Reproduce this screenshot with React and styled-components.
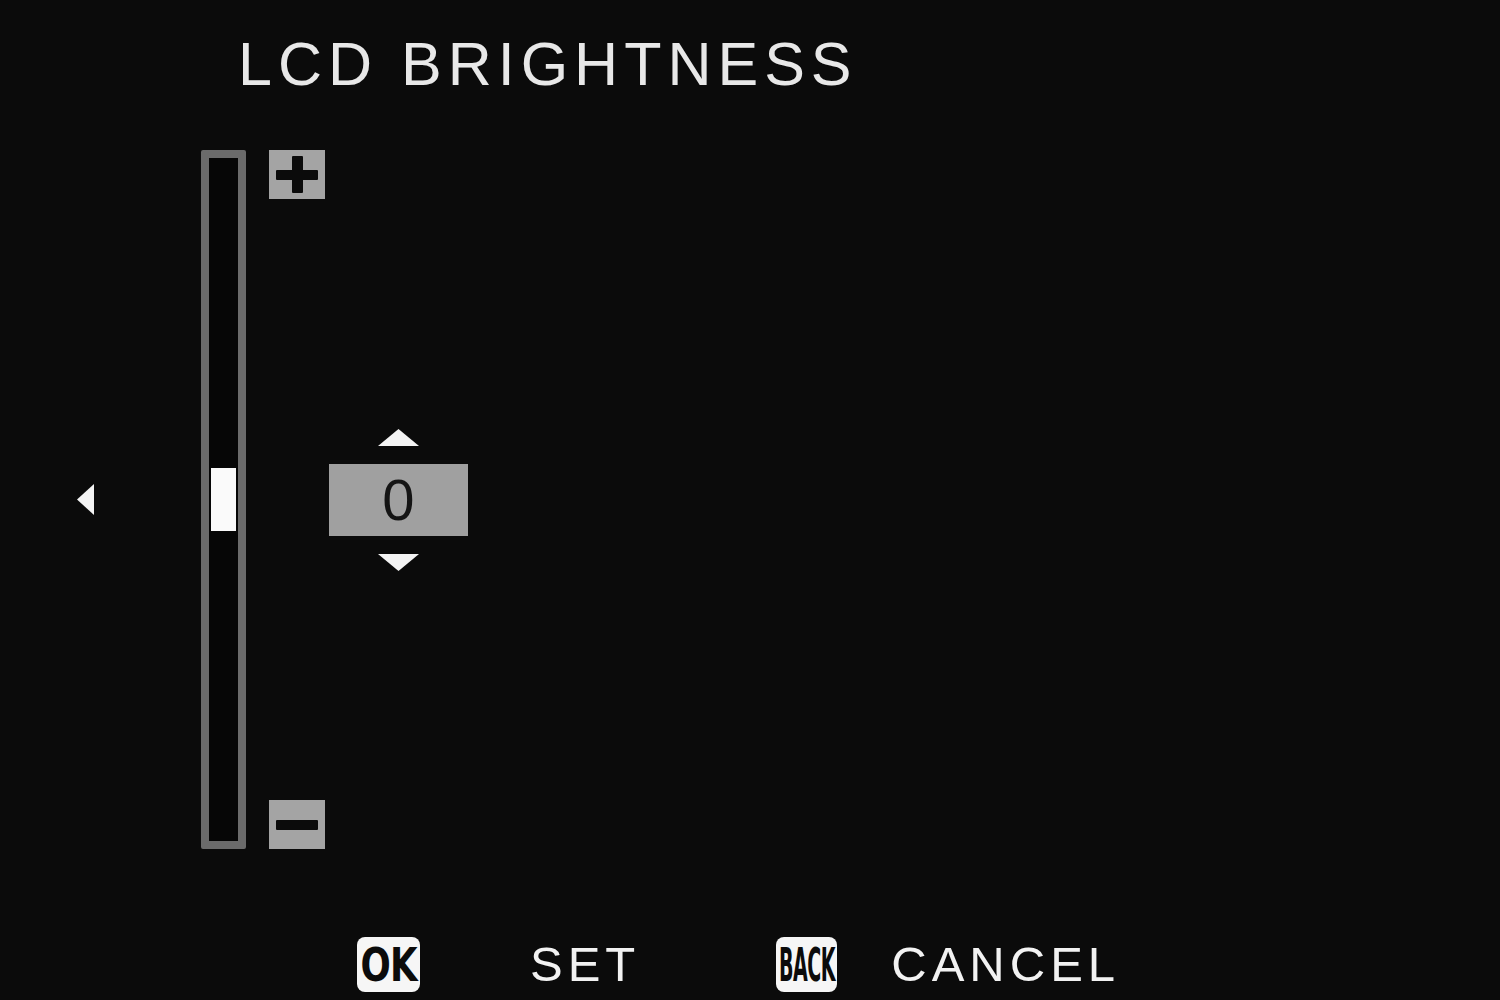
import React from 'react'
import styled, { createGlobalStyle } from 'styled-components'

const GlobalStyle = createGlobalStyle`
    html, body {
        margin: 0;
        padding: 0;
        background: #0b0b0b;
    }
`;

const Triangle = ({ dir, w, h }) => {
    const points = {
        up: `0,${h} ${w / 2},0 ${w},${h}`,
        down: `0,0 ${w},0 ${w / 2},${h}`,
        left: `${w},0 0,${h / 2} ${w},${h}`,
    }[dir]
    return (
        <svg width={w} height={h} viewBox={`0 0 ${w} ${h}`} style={{ display: 'block' }}>
            <polygon points={points} fill="#f4f4f4" />
        </svg>
    )
}

const Key = ({ label, scale, left, width }) => (
    <KeyBadge $left={left} $width={width}>
        <KeyLabel $scale={scale}>{label}</KeyLabel>
    </KeyBadge>
)

export default function App() {
    const level = 0
    return (
        <>
            <GlobalStyle />
            <Screen>
                <Title>LCD BRIGHTNESS</Title>
                <Main>
                    <Pointer>
                        <Triangle dir="left" w={17} h={31} />
                    </Pointer>
                    <Track>
                        <Thumb />
                    </Track>
                    <ButtonColumn>
                        <StepButton>
                            <PlusBar />
                            <PlusStem />
                        </StepButton>
                        <StepButton>
                            <PlusBar />
                        </StepButton>
                    </ButtonColumn>
                    <Stepper>
                        <Triangle dir="up" w={41} h={17} />
                        <ValueBox>{level}</ValueBox>
                        <Triangle dir="down" w={41} h={17} />
                    </Stepper>
                </Main>
                <Footer>
                    <Key label="OK" scale={0.86} left={357} width={63} />
                    <Hint $left={110}>SET</Hint>
                    <Key label="BACK" scale={0.46} left={136} width={61} />
                    <Hint $left={54}>CANCEL</Hint>
                </Footer>
            </Screen>
        </>
    )
}

const Screen = styled.div`
    width: 1500px;
    height: 1000px;
    background: #0b0b0b;
    display: flex;
    flex-direction: column;
    font-family: "Liberation Sans", Arial, sans-serif;
    color: #f2f2f2;
    overflow: hidden;
`;

const Title = styled.h1`
    margin: 0;
    padding: 34px 0 0 238px;
    font-size: 61px;
    line-height: 61px;
    font-weight: 400;
    letter-spacing: 6px;
    color: #e8e8e8;
`;

const Main = styled.div`
    margin-top: 55px;
    display: flex;
    align-items: center;
`;

const Pointer = styled.div`
    margin-left: 77px;
`;

const Track = styled.div`
    margin-left: 107px;
    width: 45px;
    height: 699px;
    box-sizing: border-box;
    border: 8px solid #6b6b6b;
    border-radius: 2px;
    background: #060606;
    display: flex;
    align-items: center;
    padding-left: 2px;
`;

const Thumb = styled.div`
    width: 25px;
    height: 63px;
    background: #fafafa;
`;

const ButtonColumn = styled.div`
    margin-left: 23px;
    height: 699px;
    display: flex;
    flex-direction: column;
    justify-content: space-between;
`;

const StepButton = styled.div`
    position: relative;
    width: 56px;
    height: 49px;
    background: #a4a4a4;
    display: flex;
    align-items: center;
    justify-content: center;
`;

const PlusBar = styled.div`
    width: 42px;
    height: 10px;
    background: #0b0b0b;
    border-radius: 1px;
`;

const PlusStem = styled.div`
    position: absolute;
    left: 23px;
    top: 6px;
    width: 11px;
    height: 37px;
    background: #0b0b0b;
    border-radius: 1px;
`;

const Stepper = styled.div`
    margin-left: 4px;
    display: flex;
    flex-direction: column;
    align-items: center;
    gap: 18px;
`;

const ValueBox = styled.div`
    width: 139px;
    height: 72px;
    background: #a0a0a0;
    color: #141414;
    font-size: 58px;
    line-height: 72px;
    text-align: center;
    font-weight: 400;
`;

const Footer = styled.div`
    margin-top: 88px;
    display: flex;
    align-items: center;
`;

const KeyBadge = styled.div`
    margin-left: ${p => p.$left}px;
    width: ${p => p.$width}px;
    height: 55px;
    flex-shrink: 0;
    background: #f6f6f6;
    border-radius: 8px;
    display: flex;
    align-items: center;
    justify-content: center;
    overflow: visible;
`;

const KeyLabel = styled.span`
    display: inline-block;
    color: #0b0b0b;
    font-family: "Liberation Sans Narrow", "DejaVu Sans Condensed", "Liberation Sans", sans-serif;
    font-weight: 700;
    font-size: 46px;
    line-height: 1;
    letter-spacing: -1px;
    white-space: nowrap;
    transform: scaleX(${p => p.$scale});
`;

const Hint = styled.span`
    margin-left: ${p => p.$left}px;
    font-size: 49px;
    line-height: 55px;
    letter-spacing: 5px;
    color: #f2f2f2;
`;
